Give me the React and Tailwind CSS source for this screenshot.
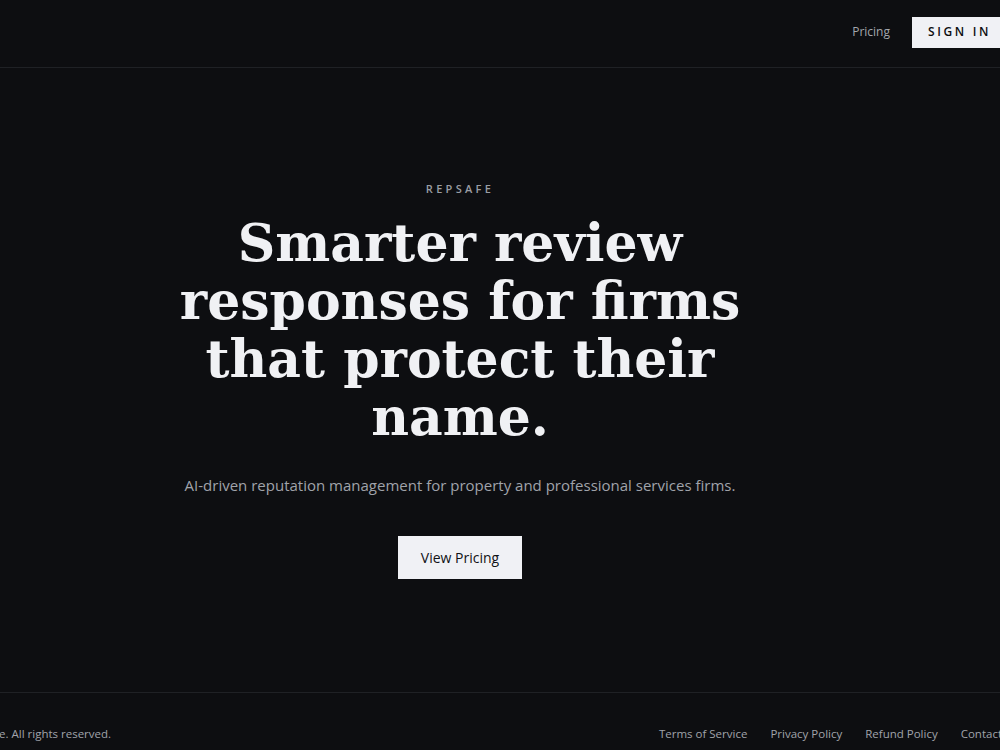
import React from "react";

const sans = { fontFamily: '"Open Sans", "Noto Sans", sans-serif' };

function Header() {
  return (
    <header className="h-[68px] border-b border-[#1f2125] pl-6 pr-[25px] pb-[3px] flex items-center justify-end gap-[22px]">
      <a className="text-[12px] text-[#a4a7ae]">Pricing</a>
      <button className="h-[31px] px-4 bg-[#f0f1f5] text-[#0d0e11] text-[12px] font-semibold tracking-[0.22em]">
        SIGN IN
      </button>
    </header>
  );
}

function Hero() {
  return (
    <main className="h-[624px] flex flex-col items-center justify-center text-center">
      <p className="text-[11px] tracking-[0.3em] text-[#9a9da4] font-semibold">REPSAFE</p>
      <h1
        className="mt-4 w-[620px] text-[52px] leading-[58px] font-bold text-[#f0f1f4]"
        style={{ fontFamily: '"DejaVu Serif", "Liberation Serif", serif' }}
      >
        Smarter review responses for firms that protect their name.
      </h1>
      <p className="mt-7 text-[15px] text-[#a0a3aa]">
        AI-driven reputation management for property and professional services firms.
      </p>
      <button className="mt-10 w-[124px] h-[43px] bg-[#f0f1f5] text-[#111216] text-[14px] font-medium">
        View Pricing
      </button>
    </main>
  );
}

function Footer() {
  return (
    <footer className="border-t border-[#1f2125] pl-8 pr-[30px] pt-8 pb-8 flex items-center justify-between text-[11.5px] text-[#a0a3aa]">
      <span>© 2025 RepSafe. All rights reserved.</span>
      <nav className="flex gap-[23px]">
        <a>Terms of Service</a>
        <a>Privacy Policy</a>
        <a>Refund Policy</a>
        <a>Contact</a>
      </nav>
    </footer>
  );
}

export default function App() {
  return (
    <div className="min-h-screen bg-[#0d0e11] overflow-hidden" style={sans}>
      <div className="w-[1144px] -ml-[112px]">
        <Header />
        <Hero />
        <Footer />
      </div>
    </div>
  );
}
